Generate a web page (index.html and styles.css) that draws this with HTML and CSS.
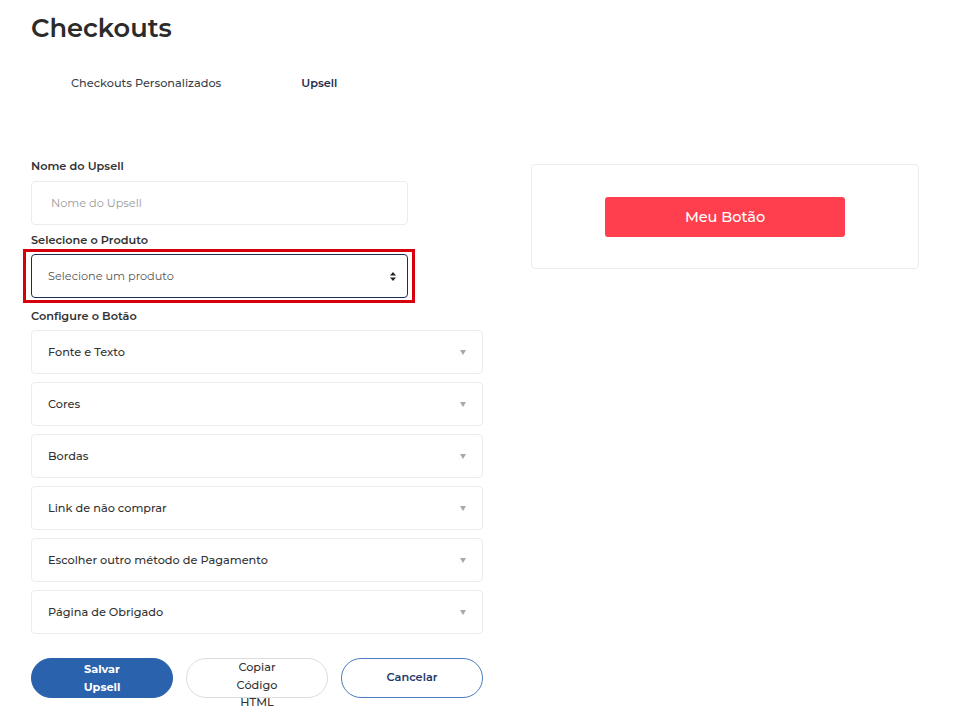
FILE: index.html
```html
<!DOCTYPE html>
<html lang="pt">
<head>
<meta charset="utf-8">
<title>Checkouts</title>
<link rel="stylesheet" href="styles.css">
</head>
<body>
<div class="page">
  <h1 class="title">Checkouts</h1>
  <nav class="tabs">
    <a class="tab">Checkouts Personalizados</a>
    <a class="tab tab-active">Upsell</a>
  </nav>
  <div class="content">
    <div class="form">
      <label class="label">Nome do Upsell</label>
      <div class="input narrow"><span class="placeholder">Nome do Upsell</span></div>
      <label class="label">Selecione o Produto</label>
      <div class="highlight">
        <div class="select">
          <span>Selecione um produto</span>
          <svg class="updown" width="6" height="9" viewBox="0 0 6 9"><path d="M3 0L6 3.5H0Z M3 9L6 5.5H0Z" fill="#222"/></svg>
        </div>
      </div>
      <label class="label label-cfg">Configure o Botão</label>
      <div class="accordion">
        <div class="acc-item"><span>Fonte e Texto</span><i class="caret"></i></div>
        <div class="acc-item"><span>Cores</span><i class="caret"></i></div>
        <div class="acc-item"><span>Bordas</span><i class="caret"></i></div>
        <div class="acc-item"><span>Link de não comprar</span><i class="caret"></i></div>
        <div class="acc-item"><span>Escolher outro método de Pagamento</span><i class="caret"></i></div>
        <div class="acc-item"><span>Página de Obrigado</span><i class="caret"></i></div>
      </div>
      <div class="actions">
        <div class="btn btn-primary" role="button">Salvar Upsell</div>
        <div class="btn btn-light" role="button">Copiar Código HTML</div>
        <div class="btn btn-outline" role="button">Cancelar</div>
      </div>
    </div>
    <div class="preview">
      <div class="my-btn" role="button">Meu Botão</div>
    </div>
  </div>
</div>
</body>
</html>
```
FILE: styles.css
```css
* { box-sizing: border-box; }
html, body { margin: 0; background: #fff; min-height: 100%; }
body {
  font-family: "Montserrat", "Inter", "Noto Sans", sans-serif;
  color: #333;
}
.page { padding: 0 31px 40px; min-height: 721px; }
.title {
  margin: 0;
  padding-top: 12px;
  font-size: 25.7px;
  line-height: 32px;
  font-weight: 600;
  color: #2b2b2b;
}
.tabs {
  display: flex;
  margin-top: 31px;
}
.tab {
  padding: 0 40px;
  font-size: 11.3px;
  line-height: 16px;
  color: #3a3f4b;
  font-weight: 500;
}
.tab-active { font-weight: 600; color: #1f2d4d; }
.content {
  display: flex;
  gap: 48px;
  margin-top: 67px;
}
.form { width: 452px; display: flex; flex-direction: column; }
.label {
  font-size: 11.3px;
  line-height: 16px;
  font-weight: 600;
  color: #333;
  margin-bottom: 7px;
}
.label-cfg { margin-bottom: 6px; }
.input {
  height: 44px;
  border: 1px solid #ececec;
  border-radius: 4px;
  display: flex;
  align-items: center;
  padding-left: 19px;
  margin-bottom: 7px;
}
.narrow { width: 377px; }
.placeholder { font-size: 11.3px; color: #9a9a9a; }
.highlight {
  width: 392px;
  margin-left: -8px;
  margin-top: -6px;
  padding: 2px 5px;
  border: 3px solid #d6000c;
  margin-bottom: 5px;
}
.select {
  height: 44px;
  width: 377px;
  border: 1px solid #1f2d4d;
  border-radius: 4px;
  display: flex;
  align-items: center;
  justify-content: space-between;
  padding: 0 11px 0 16px;
  font-size: 11.3px;
  color: #555;
}
.accordion { display: flex; flex-direction: column; gap: 8px; }
.acc-item {
  height: 44px;
  border: 1px solid #ececec;
  border-radius: 4px;
  display: flex;
  align-items: center;
  justify-content: space-between;
  padding: 0 16px 0 16px;
  font-size: 11.3px;
  font-weight: 500;
  color: #333;
}
.caret {
  width: 0; height: 0;
  border-left: 3.5px solid transparent;
  border-right: 3.5px solid transparent;
  border-top: 5px solid #a8a8a8;
}
.actions {
  display: flex;
  gap: 13px;
  margin-top: 24px;
}
.btn {
  width: 142px;
  height: 40px;
  border-radius: 20px;
  padding: 2px 46px 0;
  font-size: 11.3px;
  line-height: 17.5px;
  display: block;
  text-align: center;
  cursor: pointer;
  overflow: visible;
}
.btn-primary { background: #2a62ad; border: 1px solid #2a62ad; color: #fff; font-weight: 700; }
.btn-light { background: #fff; border: 1px solid #dcdcdc; color: #333; font-weight: 500; padding-top: 0; }
.btn-outline { background: #fff; border: 1px solid #4a7cc0; color: #1f3a6a; font-weight: 600; padding: 10px 20px 0; }
.preview {
  width: 388px;
  height: 105px;
  margin-top: 6px;
  border: 1px solid #ececec;
  border-radius: 4px;
  display: flex;
  justify-content: center;
  align-items: center;
}
.my-btn {
  width: 240px;
  height: 40px;
  background: #ff3f4d;
  color: #fff;
  border-radius: 3px;
  font-size: 14.5px;
  font-weight: 500;
  display: flex;
  align-items: center;
  justify-content: center;
}
```
